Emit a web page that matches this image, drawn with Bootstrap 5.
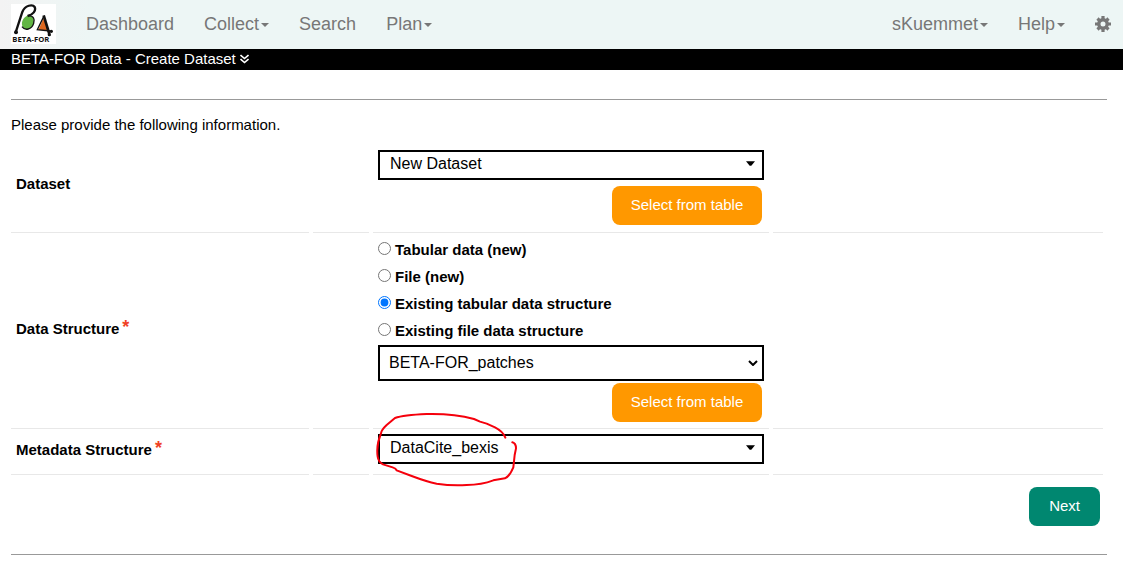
<!DOCTYPE html>
<html lang="en">
<head>
<meta charset="utf-8">
<meta name="viewport" content="width=device-width, initial-scale=1">
<title>BETA-FOR Data - Create Dataset</title>
<link rel="stylesheet" href="https://cdn.jsdelivr.net/npm/bootstrap@5.3.0/dist/css/bootstrap.min.css">
<style>
body { font: 15px/20px "Liberation Sans", Arial, sans-serif; color: #000; background: #fff; }
.topbar { height: 49px; background: linear-gradient(90deg, #f3f3f3 0, #edf6f5 90px); padding: 0 12px 2px 11px; font-size: 18px; }
.topbar .nav-link { color: #777; padding: 0; display: flex; align-items: center; }
.topbar .dropdown-toggle::after { margin-left: 2px; border-width: 4px 4px 0; vertical-align: 0; margin-top: 2px; }
.main-links { gap: 30px; margin-left: 30px; }
.user-links { gap: 30px; }
.titlebar { background: #000; color: #fff; height: 21px; padding: 0 11px 2px; }
.page-body { padding: 29px 16px 0 11px; }
.rule { border: 0; border-top: 1px solid #999; opacity: 1; margin: 0; }
.intro { margin: 0; padding: 15px 0 3px; }
.form-line { display: grid; grid-template-columns: 298fr 56fr 396px 330fr; column-gap: 4px; margin-right: 4px; }
.form-line > * { border-bottom: 1px solid #e8e8e8; padding: 5px; }
.form-line > .caption-cell { display: flex; align-items: center; font-weight: bold; padding-bottom: 8px; }
.req { color: #f04124; font-size: 18px; margin: 0 0 4px 3px; }
.box { width: 386px; height: 30px; border: 2px solid #000; border-radius: 0; background-color: #fff; font-size: 16px; line-height: 20px; color: #000; padding: 2px 10px 4px; appearance: none; background-repeat: no-repeat; display: block; }
.box-caret { background-image: url("data:image/svg+xml,%3Csvg xmlns='http://www.w3.org/2000/svg' viewBox='0 0 8 4'%3E%3Cpath d='M0 0h8L4.700 4H3.300z'/%3E%3C/svg%3E"); background-size: 9px 5px; background-position: right 7px top 9px; }
.box-chevron { height: 36px; padding: 6px 9px; background-image: url("data:image/svg+xml,%3Csvg xmlns='http://www.w3.org/2000/svg' viewBox='0 0 10 6'%3E%3Cpath d='M1 1l4 4 4-4' fill='none' stroke='%23000' stroke-width='2'/%3E%3C/svg%3E"); background-size: 10px 6px; background-position: right 4px top 13px; }
.action { border: 0; border-radius: 8px; color: #fff; font-size: 15px; line-height: 20px; padding: 9px 20px 10px; }
.action-pick { display: block; background: #ff9800; width: 150px; margin: 6px 2px 0 auto; padding-left: 0; padding-right: 0; }
.box-chevron + .action-pick { margin-top: 2px; }
.action-next { background: #008770; }
.next-row { padding: 12px 7px 28px 0; }
.choice { display: flex; height: 27px; font-weight: bold; gap: 4px; }
.choice label { padding-top: 3px; }
.choice input { width: 13px; height: 13px; margin: 5px 0 0; accent-color: #0075ff; }
.form-line > .cell-dataset { padding: 12px 5px 7px; }
.form-line > .cell-structure { padding: 4px 5px 6px; }
.form-line > .cell-metadata { padding: 5px 5px 10px; }
.pen { position: absolute; left: -8px; top: -29px; width: 160px; height: 90px; pointer-events: none; }
</style>
</head>
<body>
<nav class="topbar d-flex align-items-center">
  <a href="#" class="d-flex" aria-label="BETA-FOR home">
    <svg width="45" height="40" viewBox="0 0 135 120">
      <rect width="135" height="120" fill="#fff"/>
      <path d="M48 35C64 32 71 46 68 58C64 76 44 81 35 68C29 56 36 41 48 35z" fill="#62b544"/>
      <path d="M15 82L34 24C42 3 65 0 71 9C76 20 66 32 50 36" fill="none" stroke="#111" stroke-width="7"/>
      <path d="M50 35C69 34 72 47 68 58C62 77 42 81 33 68" fill="none" stroke="#111" stroke-width="4"/>
      <circle cx="15" cy="85" r="6" fill="#111"/>
      <path d="M98 42L82 78H110z" fill="#df681f"/>
      <path d="M98 38L79 77L118 81" fill="none" stroke="#111" stroke-width="4"/>
      <path d="M98 34L115 90" stroke="#111" stroke-width="8"/>
      <circle cx="121" cy="82" r="5" fill="#111"/><circle cx="115" cy="92" r="5" fill="#111"/>
      <text x="4" y="115" font-family="Open Sans, sans-serif" font-size="23" font-weight="bold" fill="#111">BETA-FOR</text>
    </svg>
  </a>
  <div class="main-links d-flex">
    <a class="nav-link" href="#">Dashboard</a>
    <a class="nav-link dropdown-toggle" href="#">Collect</a>
    <a class="nav-link" href="#">Search</a>
    <a class="nav-link dropdown-toggle" href="#">Plan</a>
  </div>
  <div class="user-links d-flex ms-auto">
    <a class="nav-link dropdown-toggle" href="#">sKuemmet</a>
    <a class="nav-link dropdown-toggle" href="#">Help</a>
    <a class="nav-link" href="#" aria-label="Settings">
      <svg width="16" height="16" viewBox="-8 -8 16 16" fill="none" stroke="#777">
        <circle r="4.200" stroke-width="3.400"/>
        <path d="M0-8V-5M0 8V5M-8 0H-5M8 0H5M-5.500-5.500L-3.700-3.700M5.500 5.500L3.700 3.700M-5.500 5.500L-3.700 3.700M5.500-5.500L3.700-3.700" stroke-width="3.200"/>
      </svg>
    </a>
  </div>
</nav>
<div class="titlebar d-flex align-items-center gap-1">
  <span>BETA-FOR Data - Create Dataset</span>
  <svg width="9" height="10" viewBox="0 0 9 10" fill="none" stroke="#fff" stroke-width="1.600"><path d="M.5 1l4 3.500 4-3.500M.5 5l4 3.500 4-3.500"/></svg>
</div>
<main class="page-body">
  <hr class="rule">
  <p class="intro">Please provide the following information.</p>
  <form onsubmit="return false">
    <div class="form-line">
      <div class="caption-cell"><label for="dataset">Dataset</label></div>
      <div></div>
      <div class="cell-dataset">
        <select class="box box-caret" id="dataset"><option>New Dataset</option></select>
        <button type="button" class="action action-pick">Select from table</button>
      </div>
      <div></div>
    </div>
    <div class="form-line">
      <div class="caption-cell"><label for="structure">Data Structure</label><span class="req">*</span></div>
      <div></div>
      <div class="cell-structure">
        <div class="choice"><input type="radio" name="kind" id="k1"><label for="k1">Tabular data (new)</label></div>
        <div class="choice"><input type="radio" name="kind" id="k2"><label for="k2">File (new)</label></div>
        <div class="choice"><input type="radio" name="kind" id="k3" checked><label for="k3">Existing tabular data structure</label></div>
        <div class="choice"><input type="radio" name="kind" id="k4"><label for="k4">Existing file data structure</label></div>
        <select class="box box-chevron" id="structure"><option>BETA-FOR_patches</option></select>
        <button type="button" class="action action-pick">Select from table</button>
      </div>
      <div></div>
    </div>
    <div class="form-line">
      <div class="caption-cell"><label for="metadata">Metadata Structure</label><span class="req">*</span></div>
      <div></div>
      <div class="cell-metadata">
        <div class="position-relative">
          <select class="box box-caret" id="metadata"><option>DataCite_bexis</option></select>
          <svg class="pen" viewBox="0 0 480 270" fill="none" stroke="#f5000c" stroke-width="6" stroke-linecap="round" stroke-linejoin="round">
            <path d="M406 98Q400 80 375 67L350 56L330 50L312 42Q250 25 170 27Q100 30 75 39L50 60Q34 75 33 85Q18 120 23 155Q25 171 39 178L68 187Q78 190 80 196L125 213Q170 230 200 236Q245 243 290 240Q335 239 370 226L405 220Q418 215 430 187L434 150L438 130Q438 115 427 112"/>
          </svg>
        </div>
      </div>
      <div></div>
    </div>
    <div class="text-end next-row"><button type="submit" class="action action-next">Next</button></div>
  </form>
  <hr class="rule">
</main>
<script src="https://cdn.jsdelivr.net/npm/bootstrap@5.3.0/dist/js/bootstrap.bundle.min.js"></script>
</body>
</html>
